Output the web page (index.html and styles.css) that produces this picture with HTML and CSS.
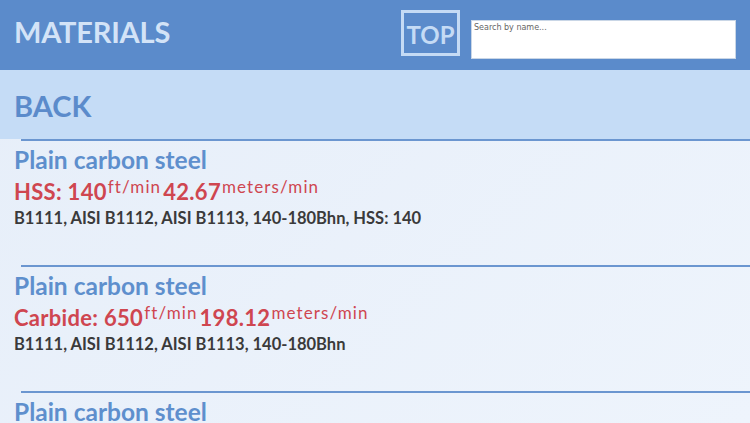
FILE: index.html
```html
<!DOCTYPE html>
<html>
<head>
<meta charset="utf-8">
<link rel="stylesheet" href="styles.css">
</head>
<body>
<header class="topbar">
  <h1 class="title">MATERIALS</h1>
  <div class="top-btn">TOP</div>
  <input class="search" type="text" placeholder="Search by name...">
</header>
<nav class="backbar"><span class="back">BACK</span></nav>
<main class="list">
  <section class="item">
    <div class="rule"></div>
    <div class="name">Plain carbon steel</div>
    <div class="speed"><span class="val">HSS: 140</span><sup class="unit">ft/min</sup><span class="val">42.67</span><sup class="unit">meters/min</sup></div>
    <div class="desc">B1111, AISI B1112, AISI B1113, 140-180Bhn, HSS: 140</div>
  </section>
  <section class="item">
    <div class="rule"></div>
    <div class="name">Plain carbon steel</div>
    <div class="speed"><span class="val">Carbide: 650</span><sup class="unit">ft/min</sup><span class="val">198.12</span><sup class="unit">meters/min</sup></div>
    <div class="desc">B1111, AISI B1112, AISI B1113, 140-180Bhn</div>
  </section>
  <section class="item">
    <div class="rule"></div>
    <div class="name">Plain carbon steel</div>
  </section>
</main>
</body>
</html>
```
FILE: styles.css
```css
* { box-sizing: border-box; }
html, body { margin: 0; padding: 0; }
body {
  width: 750px;
  height: 423px;
  overflow: hidden;
  font-family: "Lato", "Noto Sans", sans-serif;
  background: linear-gradient(135deg, #e6eef9 0%, #eef4fc 100%);
}
.topbar {
  height: 70px;
  background: #5b8bcb;
  display: flex;
  align-items: flex-start;
  padding: 0 14px;
}
.title {
  margin: 0;
  padding-top: 14px;
  font-size: 29px;
  line-height: 36px;
  font-weight: 700;
  color: #d3e3f7;
  letter-spacing: -0.2px;
}
.top-btn {
  margin-left: auto;
  margin-top: 10px;
  width: 59px;
  height: 46px;
  border: 3px solid #c5dbf5;
  color: #c5dbf5;
  font-size: 24px;
  font-weight: 700;
  display: flex;
  align-items: center;
  justify-content: center;
  padding-top: 2px;
}
.search {
  margin-top: 20px;
  margin-left: 11px;
  width: 265px;
  height: 39px;
  border: 1px solid #c9d6e6;
  background: #fff;
  font-family: "DejaVu Sans", sans-serif;
  font-size: 8px;
  padding: 0 2px 24px;
  outline: none;
}
.search::placeholder { color: #666; }
.backbar {
  height: 69px;
  background: #c5dcf6;
  display: flex;
  align-items: center;
  padding-left: 14px;
}
.back {
  font-size: 29px;
  font-weight: 700;
  color: #5b8bcb;
  padding-top: 2px;
}
.item {
  height: 126px;
}
.rule {
  margin-left: 21px;
  height: 2px;
  background: #6b96d0;
}
.name {
  padding-left: 14px;
  margin-top: 5px;
  font-size: 24.5px;
  line-height: 28px;
  font-weight: 700;
  color: #5e8fcd;
}
.speed {
  padding-left: 14px;
  margin-top: 3px;
  font-size: 22px;
  line-height: 29px;
  font-weight: 700;
  color: #cf4650;
  white-space: nowrap;
  letter-spacing: 0.3px;
}
.unit {
  font-size: 17px;
  font-weight: 400;
  letter-spacing: 1.1px;
  vertical-align: 7px;
  line-height: 0;
  margin: 0 2px 0 1px;
}
.desc {
  padding-left: 14px;
  margin-top: 1px;
  font-size: 16.5px;
  line-height: 22px;
  font-weight: 700;
  color: #3a3a3a;
}
```
